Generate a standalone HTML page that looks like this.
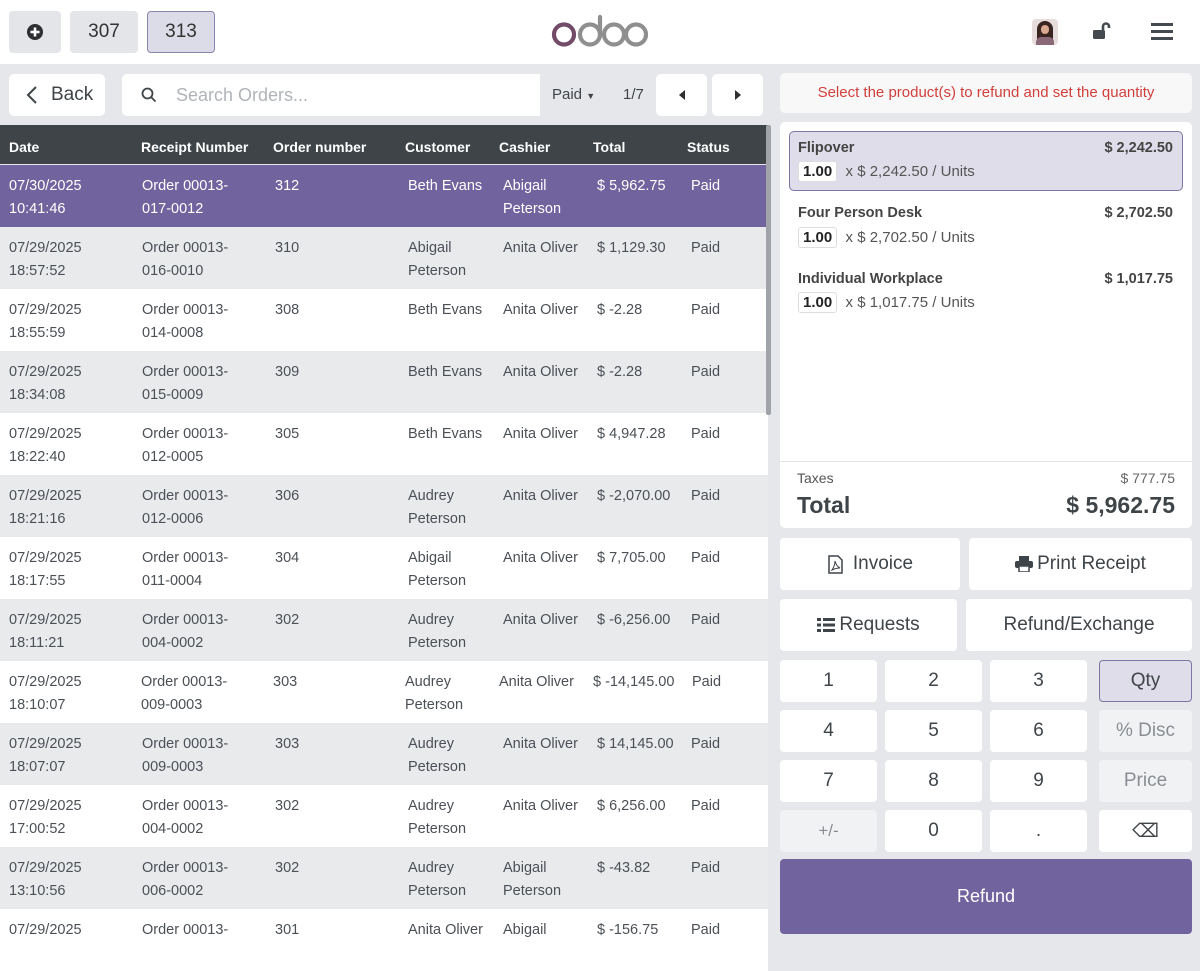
<!DOCTYPE html>
<html><head><meta charset="utf-8"><style>
*{box-sizing:border-box;margin:0;padding:0}
body{width:1200px;height:943px;overflow:hidden;background:#e6e7ea;font-family:"Liberation Sans",sans-serif;color:#374151;position:relative}
.a{position:absolute}
.top{left:0;top:0;width:1200px;height:64px;background:#fff}
.tb{background:#e4e5e8;border-radius:4px;font-size:19px;display:flex;align-items:center;justify-content:center;color:#333}
.w{background:#fff;border-radius:5px}
.hdr{left:0;top:125px;width:768px;height:39px;background:#3e4447;color:#fff;font-weight:bold;font-size:14px}
.row{left:0;width:768px;height:62px;font-size:14.5px;color:#4b5056}
.c{position:absolute;top:10px;line-height:22.5px}
.hdr .c{top:11px}
.btn{position:absolute;background:#fff;border-radius:4px;display:flex;align-items:center;justify-content:center;font-size:19px;color:#3f4448}
.g{background:#f1f2f4;color:#8a8e93}
</style></head><body>
<div class="a top"></div>
<div class="a tb" style="left:9px;top:11px;width:52px;height:42px"><svg width="18" height="18" viewBox="0 0 18 18"><circle cx="9" cy="9" r="8" fill="#2d2f31"/><rect x="4.5" y="7.7" width="9" height="2.6" fill="#fff"/><rect x="7.7" y="4.5" width="2.6" height="9" fill="#fff"/></svg></div>
<div class="a tb" style="left:70px;top:11px;width:68px;height:42px">307</div>
<div class="a tb" style="left:147px;top:11px;width:68px;height:42px;background:#dcdbe8;border:1px solid #8b84ad">313</div>
<svg class="a" style="left:550px;top:14px" width="100" height="34" viewBox="0 0 100 34"><circle cx="14" cy="20.5" r="10" stroke="#714b67" stroke-width="4.2" fill="none"/><circle cx="40" cy="20.5" r="10" stroke="#8f8f8f" stroke-width="4.2" fill="none"/><path d="M50 3v18" stroke="#8f8f8f" stroke-width="4.2" stroke-linecap="round"/><circle cx="64" cy="20.5" r="10" stroke="#8f8f8f" stroke-width="4.2" fill="none"/><circle cx="86" cy="20.5" r="10" stroke="#8f8f8f" stroke-width="4.2" fill="none"/></svg>
<div class="a" style="left:1032px;top:19px;width:26px;height:26px;border-radius:4px;background:#e6dcdc;overflow:hidden"><div class="a" style="left:5px;top:2px;width:16px;height:24px;border-radius:8px 8px 2px 2px;background:#3a2420"></div><div class="a" style="left:9px;top:6px;width:8px;height:9px;border-radius:4px;background:#d9a890"></div><div class="a" style="left:4px;top:18px;width:18px;height:10px;border-radius:5px 5px 0 0;background:#8a6878"></div></div>
<svg class="a" style="left:1092px;top:21px" width="20" height="20" viewBox="0 0 20 20"><path d="M11 9V5.5a3 3 0 0 1 6 0V7" stroke="#444a50" stroke-width="2.6" fill="none"/><rect x="1" y="9" width="12" height="9" rx="1.5" fill="#444a50"/></svg>
<svg class="a" style="left:1151px;top:22px" width="22" height="18"><rect y="1" width="22" height="3" fill="#444a50"/><rect y="8" width="22" height="3" fill="#444a50"/><rect y="15" width="22" height="3" fill="#444a50"/></svg>

<div class="a w" style="left:9px;top:74px;width:96px;height:42px;display:flex;align-items:center;font-size:19px;color:#3f4448"><svg style="margin:0 13px 0 17px" width="12" height="20"><path d="M10 2L2 10l8 8" stroke="#3f4448" stroke-width="2" fill="none"/></svg>Back</div>
<div class="a" style="left:122px;top:74px;width:418px;height:42px;background:#fff;border-radius:5px 0 0 5px;display:flex;align-items:center;font-size:18px;color:#b0b4b9"><svg style="margin:0 19px 0 19px" width="16" height="16"><circle cx="6.5" cy="6.5" r="5" stroke="#3f4448" stroke-width="1.8" fill="none"/><path d="M10 10l4.5 4.5" stroke="#3f4448" stroke-width="1.8"/></svg>Search Orders...</div>
<div class="a" style="left:552px;top:86px;font-size:15px;color:#3f4448">Paid <span style="font-size:9px">▼</span></div>
<div class="a" style="left:623px;top:86px;font-size:15px;color:#3f4448">1/7</div>
<div class="a w" style="left:656px;top:74px;width:51px;height:42px;display:flex;align-items:center;justify-content:center"><svg width="8" height="12"><path d="M7 1L1 6l6 5z" fill="#2d2f31"/></svg></div>
<div class="a w" style="left:712px;top:74px;width:51px;height:42px;display:flex;align-items:center;justify-content:center"><svg width="8" height="12"><path d="M1 1l6 5-6 5z" fill="#2d2f31"/></svg></div>

<div class="a hdr"><span class="c" style="left:9px">Date</span><span class="c" style="left:141px">Receipt Number</span><span class="c" style="left:273px">Order number</span><span class="c" style="left:405px">Customer</span><span class="c" style="left:499px">Cashier</span><span class="c" style="left:593px">Total</span><span class="c" style="left:687px">Status</span></div>

<div class="a row" style="top:165px;background:#71639e;color:#fff"><span class="c" style="left:9px">07/30/2025<br>10:41:46</span><span class="c" style="left:142px">Order 00013-<br>017-0012</span><span class="c" style="left:275px">312</span><span class="c" style="left:408px">Beth Evans</span><span class="c" style="left:503px">Abigail<br>Peterson</span><span class="c" style="left:597px">$ 5,962.75</span><span class="c" style="left:691px">Paid</span></div>
<div class="a row" style="top:227px;background:#e9eaec"><span class="c" style="left:9px">07/29/2025<br>18:57:52</span><span class="c" style="left:142px">Order 00013-<br>016-0010</span><span class="c" style="left:275px">310</span><span class="c" style="left:408px">Abigail<br>Peterson</span><span class="c" style="left:503px">Anita Oliver</span><span class="c" style="left:597px">$ 1,129.30</span><span class="c" style="left:691px">Paid</span></div>
<div class="a row" style="top:289px;background:#fff"><span class="c" style="left:9px">07/29/2025<br>18:55:59</span><span class="c" style="left:142px">Order 00013-<br>014-0008</span><span class="c" style="left:275px">308</span><span class="c" style="left:408px">Beth Evans</span><span class="c" style="left:503px">Anita Oliver</span><span class="c" style="left:597px">$ -2.28</span><span class="c" style="left:691px">Paid</span></div>
<div class="a row" style="top:351px;background:#e9eaec"><span class="c" style="left:9px">07/29/2025<br>18:34:08</span><span class="c" style="left:142px">Order 00013-<br>015-0009</span><span class="c" style="left:275px">309</span><span class="c" style="left:408px">Beth Evans</span><span class="c" style="left:503px">Anita Oliver</span><span class="c" style="left:597px">$ -2.28</span><span class="c" style="left:691px">Paid</span></div>
<div class="a row" style="top:413px;background:#fff"><span class="c" style="left:9px">07/29/2025<br>18:22:40</span><span class="c" style="left:142px">Order 00013-<br>012-0005</span><span class="c" style="left:275px">305</span><span class="c" style="left:408px">Beth Evans</span><span class="c" style="left:503px">Anita Oliver</span><span class="c" style="left:597px">$ 4,947.28</span><span class="c" style="left:691px">Paid</span></div>
<div class="a row" style="top:475px;background:#e9eaec"><span class="c" style="left:9px">07/29/2025<br>18:21:16</span><span class="c" style="left:142px">Order 00013-<br>012-0006</span><span class="c" style="left:275px">306</span><span class="c" style="left:408px">Audrey<br>Peterson</span><span class="c" style="left:503px">Anita Oliver</span><span class="c" style="left:597px">$ -2,070.00</span><span class="c" style="left:691px">Paid</span></div>
<div class="a row" style="top:537px;background:#fff"><span class="c" style="left:9px">07/29/2025<br>18:17:55</span><span class="c" style="left:142px">Order 00013-<br>011-0004</span><span class="c" style="left:275px">304</span><span class="c" style="left:408px">Abigail<br>Peterson</span><span class="c" style="left:503px">Anita Oliver</span><span class="c" style="left:597px">$ 7,705.00</span><span class="c" style="left:691px">Paid</span></div>
<div class="a row" style="top:599px;background:#e9eaec"><span class="c" style="left:9px">07/29/2025<br>18:11:21</span><span class="c" style="left:142px">Order 00013-<br>004-0002</span><span class="c" style="left:275px">302</span><span class="c" style="left:408px">Audrey<br>Peterson</span><span class="c" style="left:503px">Anita Oliver</span><span class="c" style="left:597px">$ -6,256.00</span><span class="c" style="left:691px">Paid</span></div>
<div class="a row" style="top:661px;background:#fff"><span class="c" style="left:9px">07/29/2025<br>18:10:07</span><span class="c" style="left:141px">Order 00013-<br>009-0003</span><span class="c" style="left:273px">303</span><span class="c" style="left:405px">Audrey<br>Peterson</span><span class="c" style="left:499px">Anita Oliver</span><span class="c" style="left:593px">$ -14,145.00</span><span class="c" style="left:692px">Paid</span></div>
<div class="a row" style="top:723px;background:#e9eaec"><span class="c" style="left:9px">07/29/2025<br>18:07:07</span><span class="c" style="left:142px">Order 00013-<br>009-0003</span><span class="c" style="left:275px">303</span><span class="c" style="left:408px">Audrey<br>Peterson</span><span class="c" style="left:503px">Anita Oliver</span><span class="c" style="left:597px">$ 14,145.00</span><span class="c" style="left:691px">Paid</span></div>
<div class="a row" style="top:785px;background:#fff"><span class="c" style="left:9px">07/29/2025<br>17:00:52</span><span class="c" style="left:142px">Order 00013-<br>004-0002</span><span class="c" style="left:275px">302</span><span class="c" style="left:408px">Audrey<br>Peterson</span><span class="c" style="left:503px">Anita Oliver</span><span class="c" style="left:597px">$ 6,256.00</span><span class="c" style="left:691px">Paid</span></div>
<div class="a row" style="top:847px;background:#e9eaec"><span class="c" style="left:9px">07/29/2025<br>13:10:56</span><span class="c" style="left:142px">Order 00013-<br>006-0002</span><span class="c" style="left:275px">302</span><span class="c" style="left:408px">Audrey<br>Peterson</span><span class="c" style="left:503px">Abigail<br>Peterson</span><span class="c" style="left:597px">$ -43.82</span><span class="c" style="left:691px">Paid</span></div>
<div class="a row" style="top:909px;background:#fff"><span class="c" style="left:9px">07/29/2025</span><span class="c" style="left:142px">Order 00013-</span><span class="c" style="left:275px">301</span><span class="c" style="left:408px">Anita Oliver</span><span class="c" style="left:503px">Abigail</span><span class="c" style="left:597px">$ -156.75</span><span class="c" style="left:691px">Paid</span></div>
<div class="a" style="left:766px;top:125px;width:5px;height:290px;background:#a0a3a7;border-radius:2px"></div>

<div class="a" style="left:780px;top:73px;width:412px;height:40px;background:#f8f8f9;border-radius:5px;text-align:center;line-height:40px;font-size:15px;color:#d23f3a">Select the product(s) to refund and set the quantity</div>
<div class="a w" style="left:780px;top:122px;width:412px;height:406px"></div>
<div class="a" style="left:789px;top:131px;width:394px;height:60px;background:#dedde9;border:1px solid #7d76a3;border-radius:5px"></div>
<div class="a" style="left:798px;top:140px;font-size:14.5px;font-weight:bold;color:#444">Flipover</div><div class="a" style="right:27px;top:140px;font-size:14.5px;font-weight:bold;color:#444">$ 2,242.50</div>
<div class="a" style="left:798px;top:161px;font-size:15px;color:#555"><span style="display:inline-block;background:#fff;border:1px solid #ddd;border-radius:3px;padding:1px 4px;font-weight:bold;color:#222">1.00</span>&nbsp; x $ 2,242.50 / Units</div>
<div class="a" style="left:798px;top:205px;font-size:14.5px;font-weight:bold;color:#444">Four Person Desk</div><div class="a" style="right:27px;top:205px;font-size:14.5px;font-weight:bold;color:#444">$ 2,702.50</div>
<div class="a" style="left:798px;top:227px;font-size:15px;color:#555"><span style="display:inline-block;background:#fff;border:1px solid #ddd;border-radius:3px;padding:1px 4px;font-weight:bold;color:#222">1.00</span>&nbsp; x $ 2,702.50 / Units</div>
<div class="a" style="left:798px;top:271px;font-size:14.5px;font-weight:bold;color:#444">Individual Workplace</div><div class="a" style="right:27px;top:271px;font-size:14.5px;font-weight:bold;color:#444">$ 1,017.75</div>
<div class="a" style="left:798px;top:292px;font-size:15px;color:#555"><span style="display:inline-block;background:#fff;border:1px solid #ddd;border-radius:3px;padding:1px 4px;font-weight:bold;color:#222">1.00</span>&nbsp; x $ 1,017.75 / Units</div>
<div class="a" style="left:780px;top:461px;width:412px;height:1px;background:#e2e3e5"></div>
<div class="a" style="left:797px;top:470px;font-size:14px;color:#555">Taxes</div><div class="a" style="right:25px;top:470px;font-size:14px;color:#666">$ 777.75</div>
<div class="a" style="left:797px;top:492px;font-size:23px;font-weight:bold;color:#3f4448">Total</div><div class="a" style="right:25px;top:492px;font-size:23px;font-weight:bold;color:#3f4448">$ 5,962.75</div>

<div class="btn" style="left:780px;top:538px;width:180px;height:52px"><svg width="17" height="19" style="margin-right:9px" viewBox="0 0 17 19"><path d="M2 1h9l4 4v13H2z" stroke="#3f4448" stroke-width="1.5" fill="none"/><path d="M5 15c2-3 3-6 3-9 1 4 3 6 5 7-3 0-6 1-8 2z" stroke="#3f4448" stroke-width="1" fill="none"/></svg>Invoice</div>
<div class="btn" style="left:969px;top:538px;width:223px;height:52px"><svg width="18" height="16" style="margin-right:4px" viewBox="0 0 18 16"><rect x="4" y="0" width="10" height="5" fill="#3f4448"/><rect x="0" y="5" width="18" height="7" rx="2" fill="#3f4448"/><rect x="4" y="10" width="10" height="6" fill="#fff" stroke="#3f4448" stroke-width="1.5"/></svg>Print Receipt</div>
<div class="btn" style="left:780px;top:599px;width:177px;height:52px"><svg width="18" height="14" style="margin-right:4px"><rect y="0" width="4" height="3" fill="#3f4448"/><rect x="6" y="0" width="12" height="3" fill="#3f4448"/><rect y="5.5" width="4" height="3" fill="#3f4448"/><rect x="6" y="5.5" width="12" height="3" fill="#3f4448"/><rect y="11" width="4" height="3" fill="#3f4448"/><rect x="6" y="11" width="12" height="3" fill="#3f4448"/></svg>Requests</div>
<div class="btn" style="left:966px;top:599px;width:226px;height:52px">Refund/Exchange</div>

<div class="btn" style="left:780px;top:660px;width:97px;height:42px">1</div>
<div class="btn" style="left:885px;top:660px;width:97px;height:42px">2</div>
<div class="btn" style="left:990px;top:660px;width:97px;height:42px">3</div>
<div class="btn" style="left:1099px;top:660px;width:93px;height:42px;background:#dedde9;border:1px solid #7d76a3">Qty</div>
<div class="btn" style="left:780px;top:710px;width:97px;height:42px">4</div>
<div class="btn" style="left:885px;top:710px;width:97px;height:42px">5</div>
<div class="btn" style="left:990px;top:710px;width:97px;height:42px">6</div>
<div class="btn g" style="left:1099px;top:710px;width:93px;height:42px">% Disc</div>
<div class="btn" style="left:780px;top:760px;width:97px;height:42px">7</div>
<div class="btn" style="left:885px;top:760px;width:97px;height:42px">8</div>
<div class="btn" style="left:990px;top:760px;width:97px;height:42px">9</div>
<div class="btn g" style="left:1099px;top:760px;width:93px;height:42px">Price</div>
<div class="btn g" style="left:780px;top:810px;width:97px;height:42px;font-size:17px">+/-</div>
<div class="btn" style="left:885px;top:810px;width:97px;height:42px">0</div>
<div class="btn" style="left:990px;top:810px;width:97px;height:42px">.</div>
<div class="btn" style="left:1099px;top:810px;width:93px;height:42px">⌫</div>
<div class="btn" style="left:780px;top:859px;width:412px;height:75px;background:#71639e;color:#fff;font-size:18px">Refund</div>
</body></html>
